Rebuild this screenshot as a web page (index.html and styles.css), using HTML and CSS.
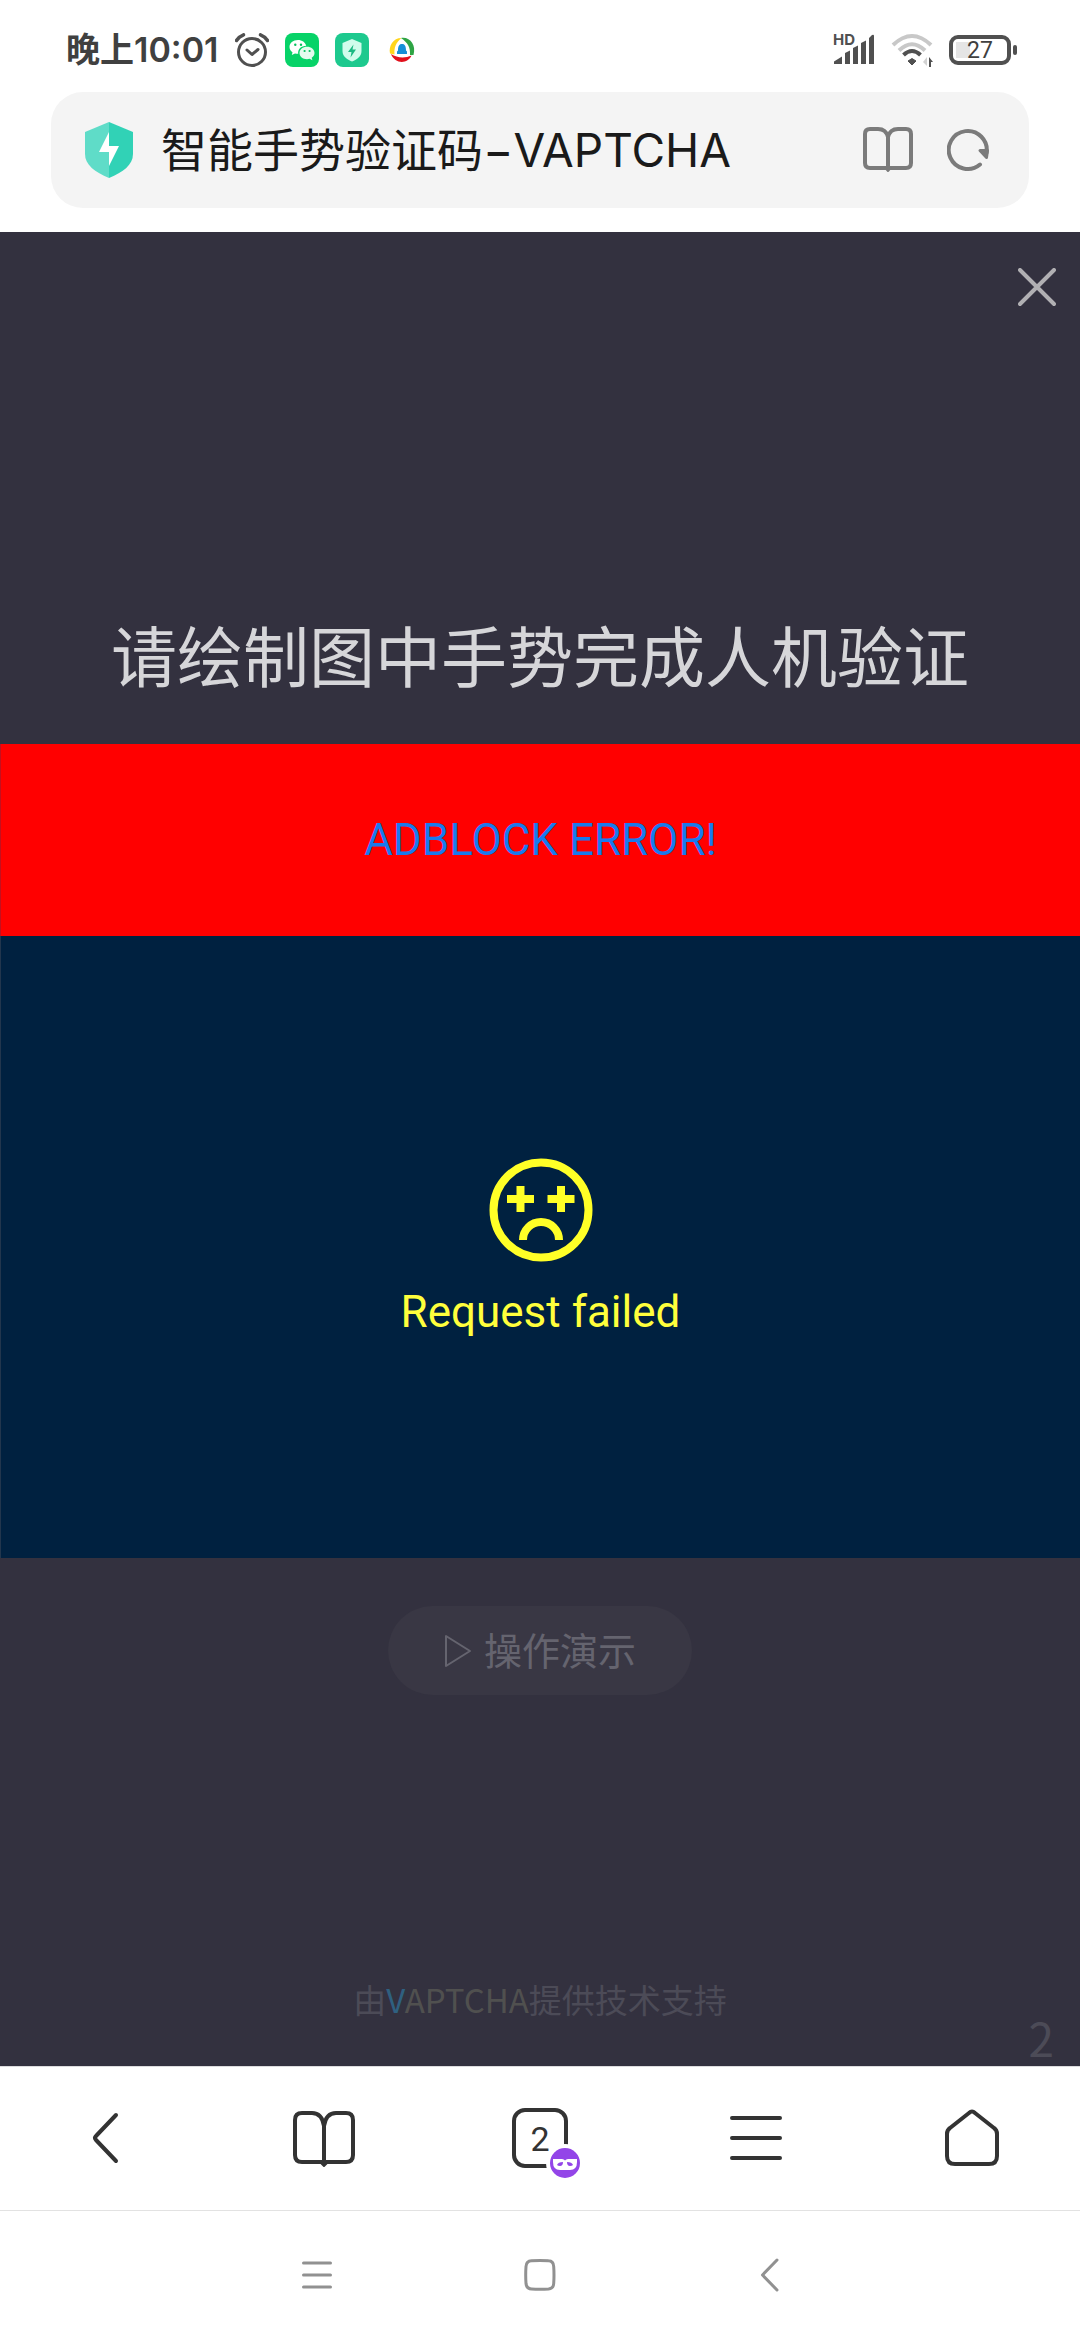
FILE: index.html
```html
<!DOCTYPE html>
<html lang="zh-CN">
<head>
<meta charset="utf-8">
<meta name="viewport" content="width=device-width, initial-scale=1">
<title>智能手势验证码-VAPTCHA</title>
<link rel="stylesheet" href="styles.css">
</head>
<body>
<div class="status-bar">
  <div class="status-left">
    <span class="clock">晚上10:01</span>
    <svg class="alarm" width="34" height="34" viewBox="0 0 34 34" fill="none" stroke="#505050" stroke-width="3" stroke-linecap="round" stroke-linejoin="round"><circle cx="17" cy="19" r="13.5"/><path d="M12 17l5 4.500 6-5"/><path d="M1.500 7.500Q4 3.500 8.500 1.800M32.500 7.500Q30 3.500 25.500 1.800" stroke-width="3.500"/></svg>
    <svg width="34" height="34" viewBox="0 0 34 34"><rect width="34" height="34" rx="8" fill="#07d368"/><path d="M13 7c-5 0-8.500 3.200-8.500 7 0 2.200 1.200 4 3 5.200L6.800 22l3.200-1.600c1 .3 2 .4 3.200.4-.7-4.400 3-8 8-8C20.400 9.400 17 7 13 7z" fill="#fff"/><path d="M22 13.800c-4.200 0-7.500 2.700-7.500 6.200s3.300 6.200 7.500 6.200c.9 0 1.800-.1 2.600-.4l2.800 1.500-.7-2.500c1.700-1.200 2.800-2.900 2.800-4.800 0-3.500-3.300-6.200-7.500-6.200z" fill="#e4fbee"/><g fill="#07c15f"><circle cx="10.300" cy="11.800" r="1.200"/><circle cx="16" cy="11.800" r="1.200"/><circle cx="19.600" cy="18" r="1.100"/><circle cx="24.600" cy="18" r="1.100"/></g></svg>
    <svg width="34" height="34" viewBox="0 0 34 34"><rect width="34" height="34" rx="8" fill="#1dc98e"/><path d="M17 6l9.500 4v8c0 5.500-4.500 8.500-9.500 10.500C12 26.500 7.500 23.500 7.500 18v-8z" fill="#d0fcec"/><path d="M18.500 11.500L13 19h3.500l-1 5.500L21 16.500h-3.500z" fill="#1ab983"/></svg>
    <svg width="34" height="34" viewBox="0 0 34 34" fill="none"><path d="M16.500 5C8 5 3.500 13 5 20.500l4.500 1C9 14 11 9.500 16.500 5z" fill="#ffd51c"/><path d="M16 5c9-1.500 15.500 7 12.500 17h-3.500c.5-8-2-12-9-17z" fill="#2ea444"/><path d="M6 21c4 10.500 17 10 20.500 1.500C20 25.500 12 25 6 21z" fill="#e1101c"/><path d="M12 21v-2.500l1-1c0-5 1.500-6.500 4-6.500s4 1.500 4 6.500l1 1V21z" fill="#168fd8"/></svg>
  </div>
  <div class="status-right">
    <svg width="42" height="50" viewBox="0 -8 42 50" fill="#505050"><text class="hd" x="0" y="12">HD</text><path d="M1 31v-2.500l8-5V31zM12 31V20l5-2.500V31zM20 31V15l5-2.500V31zM28 31V10l5-2.500V31zM36 31V5l3-3q2-1 2 1v28z"/></svg>
    <svg width="42" height="34" viewBox="0 0 42 34" fill="none" stroke-width="4"><path d="M2 12Q21-6 40 12M8 17.500Q21 5 34 17.500" stroke="#c8c8c8"/><path d="M12.500 22Q21 14 29.500 22" stroke="#505050"/><path d="M17 28l4-2.500 4 2.500-4 4z" fill="#505050" stroke="#505050" stroke-width="1"/><path d="M36 24v9l-4-4z" fill="#d2d2d2"/><path d="M38 34V24l4 5h-2v5z" fill="#505050"/></svg>
    <span class="battery"><span class="battery-level">27</span></span>
  </div>
</div>

<header class="address-row">
  <div class="address-bar">
    <svg class="site-icon" width="48" height="56" viewBox="0 0 48 56"><path d="M24 0L0 10v22c0 11 10 18 24 24z" fill="#5fdcc8"/><path d="M24 0l24 10v22c0 11-10 18-24 24z" fill="#31d2b6"/><path d="M24 10L14 30h10v14l10-20H24z" fill="#fff"/></svg>
    <h1 class="page-title">智能手势验证码−VAPTCHA</h1>
    <button class="icon-button" aria-label="阅读模式"><svg width="50" height="46" viewBox="0 0 50 46" fill="none" stroke="#7b7b7b" stroke-width="4" stroke-linejoin="round"><path d="M25 42V10q-2-8-10-8H7Q2 2 2 7v29q0 5 5 5h36q5 0 5-5V7q0-5-5-5h-8q-8 0-10 8"/><path d="M22.500 41l2.500 3 2.500-3z" fill="#7b7b7b" stroke-width="2"/></svg></button>
    <button class="icon-button" aria-label="刷新"><svg width="42" height="44" viewBox="0 0 42 44" fill="none" stroke="#7b7b7b" stroke-width="4" stroke-linecap="round"><path d="M33 36.500A19 19 0 1 1 39.500 25"/><path d="M33 22.500h7.500l-1 7z" fill="#7b7b7b" stroke-width="3" stroke-linejoin="round"/></svg></button>
  </div>
</header>

<main class="captcha">
  <div class="captcha-top">
    <button class="icon-button" aria-label="关闭"><svg width="38" height="40" viewBox="0 0 38 40" fill="none" stroke="#b1b0b3" stroke-width="4" stroke-linecap="round"><path d="M2 2l34 34M36 2L2 36"/></svg></button>
  </div>
  <h2 class="prompt">请绘制图中手势完成人机验证</h2>
  <div class="blocked">ADBLOCK ERROR!</div>
  <div class="failed">
    <svg width="104" height="104" viewBox="0 0 104 104" fill="none" stroke="#ffff27" stroke-width="8"><circle cx="52" cy="52" r="47.500"/><path d="M18 41h27M31.500 28v26M58.500 41h27M72 28v26M34 82a18 18 0 0 1 36 0"/></svg>
    <p class="failed-text">Request failed</p>
  </div>
  <button class="demo"><svg width="28" height="34" viewBox="0 0 28 34" fill="none" stroke="#65646f" stroke-width="2" stroke-linejoin="round"><path d="M2 2v30L26 17z"/></svg><span class="demo-label">操作演示</span></button>
  <footer class="captcha-foot">
    <p class="credit">由<a class="brand" href="#"><span class="brand-v">V</span>APTCHA</a>提供技术支持</p>
    <span class="count">2</span>
  </footer>
</main>

<nav class="toolbar">
  <button class="tool" aria-label="后退"><svg width="60" height="60" viewBox="0 0 60 60" fill="none" stroke="#333" stroke-width="4" stroke-linecap="round" stroke-linejoin="round"><path d="M38 7L18 28q-2 2 0 4l20 21"/></svg></button>
  <button class="tool" aria-label="书签"><svg width="62" height="60" viewBox="0 0 62 60" fill="none" stroke="#333" stroke-width="4" stroke-linejoin="round"><path d="M31 57V18Q29 5 19 5H9Q2 5 2 12v35q0 7 7 7h44q7 0 7-7V12q0-7-7-7H43q-10 0-12 13"/><path d="M28 55l3 3 3-3z" fill="#333" stroke-width="2"/></svg></button>
  <button class="tool" aria-label="标签页"><span class="tabs">2<svg class="incognito" width="38" height="38" viewBox="0 0 38 38"><circle cx="19" cy="19" r="19" fill="#fff"/><circle cx="19" cy="19" r="15" fill="#9345e8"/><path d="M7 15h9q2 0 3 1.500Q20 15 22 15h9v3q0 8-7 8H14q-7 0-7-8z" fill="#fff"/><path d="M11 21q1-3 6-3 0 4-3 4-2 0-3-1zM27 21q-1-3-6-3 0 4 3 4 2 0 3-1z" fill="#9345e8"/></svg></span></button>
  <button class="tool" aria-label="菜单"><svg width="52" height="60" viewBox="0 0 52 60" fill="none" stroke="#333" stroke-width="4" stroke-linecap="round"><path d="M2 10h48M2 30h48M2 50h48"/></svg></button>
  <button class="tool" aria-label="主页"><svg width="54" height="60" viewBox="0 0 54 60" fill="none" stroke="#333" stroke-width="4" stroke-linejoin="round"><path d="M24 5q3-3 6 0l19 15q3 2 3 6v22q0 8-8 8H10q-8 0-8-8V26q0-4 3-6z"/></svg></button>
</nav>

<div class="system-nav">
  <button class="icon-button" aria-label="最近任务"><svg width="34" height="34" viewBox="0 0 34 34" fill="none" stroke="#919191" stroke-width="3" stroke-linecap="round"><path d="M3.500 5h27M3.500 17h27M3.500 29h27"/></svg></button>
  <button class="icon-button" aria-label="主屏幕"><svg width="34" height="34" viewBox="0 0 34 34" fill="none" stroke="#919191" stroke-width="3"><path d="M8.500 2.800q8.500-.6 17 0 5 .2 5.200 5.700.6 8.500 0 17-.2 5-5.200 5.500-8.500.6-17 0-5-.2-5.500-5.500-.6-8.500 0-17 .3-5.400 5.500-5.700z"/></svg></button>
  <button class="icon-button" aria-label="返回"><svg width="34" height="34" viewBox="0 0 34 34" fill="none" stroke="#919191" stroke-width="3" stroke-linecap="round" stroke-linejoin="round"><path d="M31 2L16.500 17 31 32"/></svg></button>
</div>
</body>
</html>
```

FILE: styles.css
```css
* {
  box-sizing: border-box;
}

body {
  margin: 0;
  min-height: 100vh;
  display: flex;
  flex-direction: column;
  background: #fff;
  color: #333;
  font-family: Roboto, "Noto Sans CJK SC", sans-serif;
}

svg {
  display: block;
  flex: none;
}

h1,
h2,
p {
  margin: 0;
  font-weight: 400;
}

button {
  margin: 0;
  padding: 0;
  border: 0;
  background: none;
  color: inherit;
  font: inherit;
}

.icon-button {
  flex: none;
}

.status-bar {
  display: flex;
  justify-content: space-between;
  align-items: center;
  height: 92px;
  padding: 8px 63px 0 66px;
}

.status-left,
.status-right {
  display: flex;
  align-items: center;
  gap: 16px;
}

.clock {
  margin-right: 1px;
  color: #404040;
  font: 600 34px/40px Inter, "Noto Sans CJK SC", sans-serif;
}

.hd {
  font: 700 15px Inter, sans-serif;
}

.battery {
  display: flex;
  align-items: center;
}

.battery::after {
  content: "";
  width: 4px;
  height: 10px;
  margin-left: 2px;
  border-radius: 2px;
  background: #505050;
}

.battery-level {
  width: 62px;
  height: 30px;
  border: 4px solid #505050;
  border-radius: 9px;
  background: linear-gradient(#e5e5e5, #e5e5e5) 3px 3px / 14px 16px no-repeat;
  color: #404040;
  font-size: 23px;
  line-height: 23px;
  text-align: center;
}

.address-row {
  padding: 0 51px 24px;
}

.address-bar {
  display: flex;
  align-items: center;
  height: 116px;
  padding: 0 40px 0 34px;
  border-radius: 32px;
  background: #f4f4f4;
}

.page-title {
  flex: 1;
  margin-left: 28px;
  color: #1a1a1a;
  font: 400 46px/60px Inter, "Noto Sans CJK SC", sans-serif;
  white-space: nowrap;
}

.address-bar .icon-button + .icon-button {
  margin-left: 34px;
}

.captcha {
  flex: 1;
  display: flex;
  flex-direction: column;
  background: #33313f;
}

.captcha-top {
  display: flex;
  justify-content: flex-end;
  padding: 36px 24px 0;
}

.prompt {
  padding: 304px 24px 36px;
  color: #d6d6d9;
  font-size: 66px;
  line-height: 96px;
  text-align: center;
}

.blocked {
  padding: 66px 24px;
  border-left: 1px solid #c4101f;
  background: #f00;
  color: #187aee;
  font-size: 44px;
  line-height: 60px;
  text-align: center;
}

.failed {
  display: flex;
  flex-direction: column;
  align-items: center;
  gap: 20px;
  padding: 222px 24px 216px;
  border-left: 1px solid #22364d;
  background: #002140;
}

.failed-text {
  color: #ffff3c;
  font-size: 44px;
  line-height: 60px;
}

.demo {
  display: flex;
  align-items: center;
  align-self: center;
  gap: 12px;
  margin-top: 48px;
  padding: 16px 56px;
  border-radius: 45px;
  background: #393744;
  color: #65646f;
  font-size: 38px;
  line-height: 53px;
}

.demo-label {
  padding-top: 4px;
}

.captcha-foot {
  position: relative;
  margin-top: auto;
  padding: 0 24px 39px;
  color: #4c4b57;
  text-align: center;
}

.credit {
  font: 400 33px/56px "Noto Sans CJK SC", sans-serif;
}

.brand {
  color: #50504f;
  text-decoration: none;
}

.brand-v {
  color: #2f6080;
}

.count {
  position: absolute;
  right: 26px;
  bottom: 2px;
  font: 400 46px/54px "Noto Sans CJK SC", sans-serif;
}

.toolbar {
  display: grid;
  grid-template-columns: repeat(5, 1fr);
  height: 145px;
  padding-bottom: 2px;
  border-top: 1px solid #dcdcde;
  border-bottom: 1px solid #e2e2e2;
}

.tool {
  display: flex;
  justify-content: center;
  align-items: center;
}

.tabs {
  position: relative;
  display: block;
  width: 56px;
  height: 60px;
  border: 4px solid #333;
  border-radius: 13px;
  font-size: 34px;
  line-height: 54px;
  text-align: center;
}

.incognito {
  position: absolute;
  right: -20px;
  bottom: -18px;
}

.system-nav {
  display: flex;
  justify-content: space-between;
  align-items: center;
  height: 129px;
  padding: 0 300px 2px;
}
```
